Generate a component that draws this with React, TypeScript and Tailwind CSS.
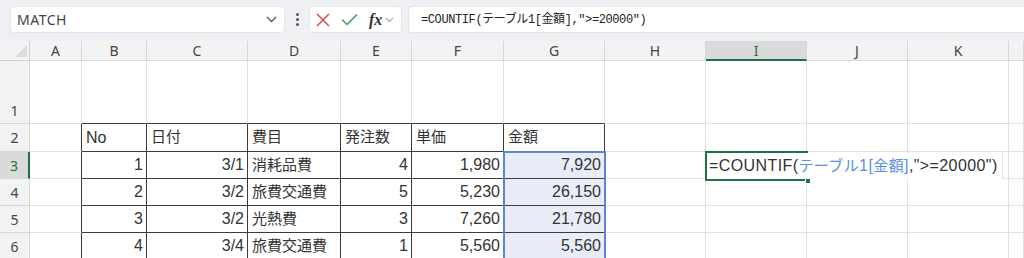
import React from 'react';

const colW = [
  'w-[30px]', 'w-[52px]', 'w-[65px]', 'w-[101px]', 'w-[93px]', 'w-[71px]',
  'w-[92px]', 'w-[101px]', 'w-[101px]', 'w-[101px]', 'w-[101px]', 'w-[101px]', 'w-[15px]',
];
const letters = ['A', 'B', 'C', 'D', 'E', 'F', 'G', 'H', 'I', 'J', 'K', ''];

const header = ['No', '日付', '費目', '発注数', '単価', '金額'];
const data: (string | number)[][] = [
  [1, '3/1', '消耗品費', 4, '1,980', '7,920'],
  [2, '3/2', '旅費交通費', 5, '5,230', '26,150'],
  [3, '3/2', '光熱費', 3, '7,260', '21,780'],
  [4, '3/4', '旅費交通費', 1, '5,560', '5,560'],
];
const rowH = ['h-[63px]', 'h-[28px]', 'h-[27px]', 'h-[27px]', 'h-[27px]', 'h-[27px]'];

function Toolbar() {
  return (
    <div className="h-[41px] bg-[#eef0f3] flex items-start pt-[6px] pl-[10px] font-['Noto_Sans','Noto_Sans_CJK_JP',sans-serif]">
      <div className="w-[275px] h-[27px] bg-white rounded-[4px] border border-[#e3e5e8] flex items-center justify-between pl-[6px] pr-[7px]">
        <span className="text-[14px] text-[#444] tracking-[0.5px]">MATCH</span>
        <svg width="11" height="7" viewBox="0 0 11 7"><path d="M1 1 L5.5 5.5 L10 1" fill="none" stroke="#555" strokeWidth="1.3" /></svg>
      </div>
      <div className="w-[24px] h-[27px] flex flex-col items-center justify-center gap-[2px]">
        <div className="w-[3px] h-[3px] rounded-full bg-[#555]" />
        <div className="w-[3px] h-[3px] rounded-full bg-[#555]" />
        <div className="w-[3px] h-[3px] rounded-full bg-[#555]" />
      </div>
      <div className="w-[93px] h-[27px] bg-white rounded-[4px] border border-[#e3e5e8] flex items-center pl-[6px] gap-[11px]">
        <svg width="14" height="14" viewBox="0 0 14 14"><path d="M1 1 L13 13 M13 1 L1 13" stroke="#e0403c" strokeWidth="1.4" /></svg>
        <svg width="17" height="13" viewBox="0 0 17 13"><path d="M1 6.5 L6 11.5 L16 1.5" fill="none" stroke="#3d9b55" strokeWidth="1.5" /></svg>
        <div className="flex items-center gap-[3px]">
          <span className="font-['Liberation_Serif',serif] italic font-bold text-[16px] text-[#333] leading-none">fx</span>
          <svg width="9" height="6" viewBox="0 0 9 6"><path d="M1 1 L4.5 4.5 L8 1" fill="none" stroke="#aaa" strokeWidth="1.1" /></svg>
        </div>
      </div>
      <div className="flex-1 ml-[6px] h-[27px] bg-white rounded-l-[4px] border border-r-0 border-[#e3e5e8] flex items-center pl-[12px]">
        <span className="font-['Liberation_Mono','Noto_Sans_CJK_JP',monospace] text-[12px] text-[#222] tracking-[-0.4px]">=COUNTIF(テーブル1[金額],"&gt;=20000")</span>
      </div>
    </div>
  );
}

function cellValue(r: number, c: number): string {
  // r: sheet row 1..6, c: column index 0..11 (A..L)
  if (c < 1 || c > 6) return '';
  if (r === 2) return header[c - 1];
  if (r >= 3) return String(data[r - 3][c - 1]);
  return '';
}

function Grid() {
  return (
    <div className="relative">
      <div className="flex h-[20px] bg-[#f3f3f3] font-['Noto_Sans',sans-serif]">
        <div className={`${colW[0]} shrink-0 border-r border-b border-[#d0d0d0] relative`}>
          <svg className="absolute left-[15px] top-[4px]" width="12" height="12" viewBox="0 0 12 12"><path d="M12 0 L12 12 L0 12 Z" fill="#dcdcdc" /></svg>
        </div>
        {letters.map((l, i) => (
          <div
            key={i}
            className={`${colW[i + 1]} shrink-0 flex items-center justify-center text-[14px] ${l === 'I' ? 'bg-[#dadada] text-[#1e7145] border-b-2 border-b-[#1e7145] border-r border-r-[#d7d7d7]' : 'text-[#444] border-r border-b border-[#d7d7d7]'}`}
          >
            {l}
          </div>
        ))}
      </div>
      {rowH.map((h, ri) => {
        const r = ri + 1;
        return (
          <div key={r} className={`flex ${h}`}>
            <div
              className={`${colW[0]} shrink-0 flex justify-center text-[14px] font-['Noto_Sans',sans-serif] ${r === 1 ? 'items-end pb-[2px]' : 'items-center'} ${r === 3 ? 'bg-[#dadada] text-[#1e7145] border-r-2 border-r-[#1e7145] border-b border-b-[#d7d7d7]' : 'bg-[#f3f3f3] text-[#444] border-r border-b border-[#d7d7d7]'}`}
            >
              {r}
            </div>
            {letters.map((_, c) => {
              const inTable = r >= 2 && c >= 1 && c <= 6;
              const rightDark = r >= 2 && c >= 0 && c <= 6;
              const bottomDark = (r === 1 && c >= 1 && c <= 6) || inTable;
              const val = cellValue(r, c);
              const numeric = r >= 3 && c !== 3;
              const jp = (r === 2 && c >= 2) || (r >= 3 && c === 3);
              return (
                <div
                  key={c}
                  className={`${colW[c + 1]} shrink-0 border-r border-b flex items-center text-[#333] ${jp ? 'text-[15px]' : 'text-[16px]'} ${rightDark ? 'border-r-[#3c3c3c]' : 'border-r-[#e1e1e1]'} ${bottomDark ? 'border-b-[#3c3c3c]' : 'border-b-[#e1e1e1]'} ${numeric ? 'justify-end pr-[3px]' : 'justify-start pl-[4px]'} ${r >= 3 && c === 6 ? 'bg-[#e8edf7]' : 'bg-white'}`}
                >
                  {val}
                </div>
              );
            })}
          </div>
        );
      })}
      {/* selected range G3:G6 */}
      <div className="absolute left-[503px] top-[110px] w-[103px] h-[120px] border-2 border-[#5a86d5] pointer-events-none" />
      {/* editing cell I3 */}
      <div className="absolute left-[705px] top-[110px] w-[103px] h-[30px] border-2 border-r-0 border-[#1e7145] pointer-events-none" />
      <div className="absolute left-[707px] top-[112px] w-[296px] h-[26px] bg-white border-r border-[#e4e4e4] flex items-center pl-[2px] text-[16px] text-[#333] whitespace-nowrap tracking-[0.4px]">
        <span>=COUNTIF(</span>
        <span className="text-[#5b8ee6]">
          <span className="text-[15px]">テーブル</span>1[<span className="text-[15px]">金額</span>]
        </span>
        <span>,"&gt;=20000")</span>
      </div>
      <div className="absolute left-[805px] top-[137px] w-[6px] h-[6px] bg-[#1e7145] border border-white" />
    </div>
  );
}

export default function App() {
  return (
    <div className="w-[1024px] h-[258px] overflow-hidden bg-white font-['Liberation_Sans','Noto_Sans_CJK_JP',sans-serif]">
      <Toolbar />
      <Grid />
    </div>
  );
}
